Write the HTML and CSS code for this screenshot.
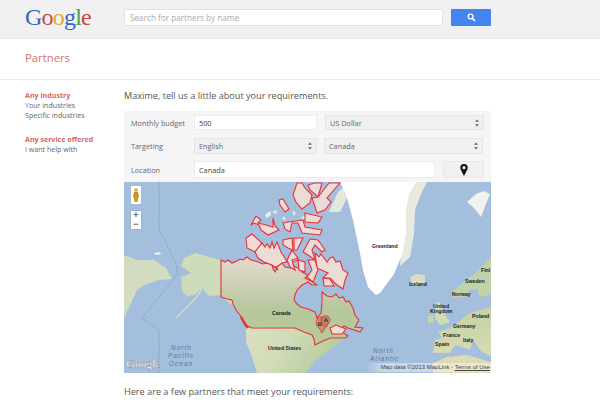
FILE: index.html
```html
<!DOCTYPE html>
<html lang="en">
<head>
<meta charset="utf-8">
<title>Google Partners</title>
<link rel="stylesheet" href="styles.css">
</head>
<body>
<header class="topbar">
  <div class="logo"><span class="g-blue">G</span><span class="g-red">o</span><span class="g-yellow">o</span><span class="g-blue">g</span><span class="g-green">l</span><span class="g-red">e</span></div>
  <div class="search">Search for partners by name</div>
  <button class="search-btn" aria-label="Search">
    <svg width="9" height="9" viewBox="0 0 11 11"><circle cx="4.300" cy="4.300" r="2.900" fill="none" stroke="#fff" stroke-width="1.600"/><path d="M6.500 6.500l3.300 3.300" stroke="#fff" stroke-width="2"/></svg>
  </button>
</header>
<div class="titlebar"><h1>Partners</h1></div>
<div class="content">
  <nav class="sidebar">
    <div class="group">
      <div class="active">Any industry</div>
      <div>Your industries</div>
      <div>Specific industries</div>
    </div>
    <div class="group">
      <div class="active">Any service offered</div>
      <div>I want help with</div>
    </div>
  </nav>
  <main class="main">
    <h2>Maxime, tell us a little about your requirements.</h2>
    <div class="panel">
      <div class="row row-a">
        <span class="label">Monthly budget</span>
        <div class="field input w-half">500</div>
        <div class="field select w-cur"><span>US Dollar</span><svg class="arrows" width="4" height="8" viewBox="0 0 5 9"><path d="M2.500 0L5 3H0zM2.500 9L0 6h5z" fill="#666"/></svg></div>
      </div>
      <div class="row row-b">
        <span class="label">Targeting</span>
        <div class="field select w-half"><span>English</span><svg class="arrows" width="4" height="8" viewBox="0 0 5 9"><path d="M2.500 0L5 3H0zM2.500 9L0 6h5z" fill="#666"/></svg></div>
        <div class="field select w-cur2"><span>Canada</span><svg class="arrows" width="4" height="8" viewBox="0 0 5 9"><path d="M2.500 0L5 3H0zM2.500 9L0 6h5z" fill="#666"/></svg></div>
      </div>
      <div class="row row-c">
        <span class="label">Location</span>
        <div class="field input w-loc">Canada</div>
        <button class="pin" aria-label="Locate">
          <svg width="8" height="12" viewBox="0 0 8 13"><path fill-rule="evenodd" d="M4 0a4 4 0 0 1 4 4c0 2.500-2.500 5.500-4 9C2.500 9.500 0 6.500 0 4a4 4 0 0 1 4-4zm0 2.200a1.800 1.800 0 1 0 0 3.600 1.800 1.800 0 0 0 0-3.600z" fill="#111"/></svg>
        </button>
      </div>
    </div>
    <div class="map">
      <svg class="map-art" width="367" height="191" viewBox="0 0 367 191">
        <defs>
          <linearGradient id="canada" gradientUnits="userSpaceOnUse" x1="0" y1="75" x2="0" y2="150"><stop offset="0" stop-color="#e2dacf"/><stop offset=".3" stop-color="#d3d2ba"/><stop offset=".7" stop-color="#b6c79c"/><stop offset="1" stop-color="#b8c99a"/></linearGradient>
          <linearGradient id="usa" gradientUnits="userSpaceOnUse" x1="120" y1="146" x2="190" y2="191"><stop offset="0" stop-color="#dadfc0"/><stop offset=".5" stop-color="#d2dcb8"/><stop offset="1" stop-color="#b8cea2"/></linearGradient>
          <linearGradient id="eur" gradientUnits="userSpaceOnUse" x1="0" y1="75" x2="0" y2="180"><stop offset="0" stop-color="#bfd0a8"/><stop offset=".6" stop-color="#c7d5a8"/><stop offset="1" stop-color="#dcdcb4"/></linearGradient>
          <path id="ca" d="M97 78L101 80 104 78 108 81 113 79 116 77 119 78 123 75 127 78 131 79 134 80 139 82 143 81 148 83 149 87 151 90 154 84 158 81 161 85 166 86 170 84 174 86 178 90 184 93 181 96 187 99 193 103 188 103 184 100 178 103 173 108 171 113 170 118 173 122 177 125 184 127 191 130 193 136 197 131 198 120 198 110 203 114 208 115 212 112 215 116 219 115 222 120 225 119 229 126 231 133 235 138 231 145 239 146 236 150 230 148 224 146 220 144 216 148 221 152 224 154 221 156 214 156 206 156 199 159 191 163 190 157 188 153 180 150 171 146 128 146 121 143 116 133 112 128 109 122 108 118 103 117 97 115z"/>
        </defs>
        <rect width="367" height="191" fill="#a4bfdd"/>
        <g class="land">
          <path fill="#d2dcc0" d="M0 73L13 78 30 78 42 86 48 97 35 98 20 103 13 108 7 121 0 136z"/>
          <path fill="#eef1ee" d="M30 71L36 70 37 72 32 73z"/>
          <path fill="#cfdcba" d="M97 78L85 75 72 71 60 76 57 84 67 91 57 95 58 108 62 114 70 113 78 106 85 114 97 113z"/>
          <path fill="#cfdcba" d="M97 113L108 118 112 128 108 123 97 115z"/>
          <path class="tail" d="M78 107L70 118 60 128 52 136"/>
          <use href="#ca" fill="url(#canada)"/>
          <path fill="url(#usa)" d="M122 145L171 146 188 153 191 163 206 156 221 156 212 163 200 172 190 180 182 191 133 191 128 175 122 160z"/>
          <path fill="#e4e8dc" d="M205 30L214 10 222 3 224 14 216 30z"/>
          <path fill="#e8eae0" d="M288 0L303 0 297 12 291 28 290 52 286 75 276 84 278 60 280 26z"/>
          <path fill="#fff" d="M216 0L292 0 285 12 282 28 282 52 278 73 270 92 256 111 252 113 244 105 239 88 236 71 229 38 222 12z"/>
          <path fill="#d8dcc8" d="M286 95L292 92 301 93 301 101 289 104z"/>
          <path fill="#f0f2f0" d="M343 20L352 12 360 9 366 12 362 22 357 35 350 26z"/>
          <path fill="url(#eur)" d="M367 75L349 93 339 101 328 110 329 115 341 115 346 108 353 106 356 115 364 113 367 110z"/>
          <path fill="url(#eur)" d="M367 125L346 131 334 140 326 146 314 150 318 156 311 158 309 171 326 171 331 163 338 165 346 168 349 158 358 170 367 174z"/>
          <path fill="#cfdbb0" d="M311 121L316 120 321 133 326 140 316 143 311 136z"/>
          <path fill="#c8d7a8" d="M304 134L309 133 309 141 304 141z"/>
          <path fill="#ded9b5" d="M309 191L309 181 323 175 343 173 367 180 367 191z"/>
          <path fill="#e8ecec" d="M141 33L146 29 147 33 143 36zM168 28L172 31 170 34zM148 30L152 28 153 32zM176 36L182 33 182 37zM158 37L160 34 162 38z"/>
        </g>
        <path class="dateline" d="M35 0V48L41 58 53 85V93L18 136 35 148V191"/>
        <use href="#ca" class="mainland"/>
        <path class="blob" d="M117 135L121 142 124 146"/>
        <g class="regions">
          <path d="M173 1L169 13 172 20 178 27 186 21 188 13 181 6 178 1z"/>
          <path d="M184 3L191 1 198 1 194 15 186 8z"/>
          <path d="M216 1L203 16 207 20 201 28 193 31 188 16 194 15 205 1z"/>
          <path d="M181 31L198 35 194 41 181 40z"/>
          <path d="M155 18L159 17 165 27 161 30 156 23z"/>
          <path d="M127 43L132 34 137 38 134 41 142 43 149 45 149 36 151 44 155 48 144 53 137 48 135 43 130 41z"/>
          <path d="M159 41L164 40 179 38 181 45 198 48 196 53 178 51 174 41 168 41 166 50 161 47z"/>
          <path d="M122 56L128 52 138 61 131 70 123 66z"/>
          <path d="M131 70L134 66 138 61 141 65 143 62 146 66 148 60 150 66 153 60 155 65 157 70 161 76 163 80 158 81 154 84 151 85 154 88 148 83 140 80 134 76z"/>
          <path d="M159 58L168 56 169 68 164 66 159 63z"/>
          <path d="M170 56L179 56 173 68 170 68z"/>
          <path d="M169 70L174 78 168 80z"/>
          <path d="M179 70L186 57 194 58 201 68 198 70 191 63 188 68 191 78 184 73z"/>
          <path d="M191 71L195 75 197 72 203 80 206 76 209 75 212 80 216 79 219 88 224 91 221 98 219 107 213 103 206 96 199 96 204 91 193 86z"/>
          <path d="M168 68L174 76 168 78 171 88 166 85 163 78z"/>
          <path d="M174 78L181 80 181 90 175 88z"/>
          <path d="M184 78L191 78 194 88 189 100 183 95 188 88z"/>
          <path d="M199 96L206 97 210 104 200 104z"/>
          <path d="M206 146L212 143 222 147 218 152 208 152z"/>
        </g>
        <g class="pins">
          <path d="M198 151l-3-5a6 6 0 1 1 6 0z"/>
          <path d="M201 145l-3-4a4.500 4.500 0 1 1 7 0z"/>
        </g>
        <text x="196" y="144" class="pin-letter">B</text>
        <text x="202" y="140" class="pin-letter">A</text>
        <text x="148" y="133" class="place">Canada</text>
        <text x="144" y="168" class="place">United States</text>
        <text x="248" y="66" class="place">Greenland</text>
        <text x="285" y="104" class="place">Iceland</text>
        <text x="309" y="126" class="place">United</text>
        <text x="306" y="131" class="place">Kingdom</text>
        <text x="328" y="114" class="place">Norway</text>
        <text x="341" y="101" class="place">Sweden</text>
        <text x="357" y="90" class="place">Finl</text>
        <text x="348" y="136" class="place">Poland</text>
        <text x="329" y="146" class="place">Germany</text>
        <text x="319" y="155" class="place">France</text>
        <text x="311" y="164" class="place">Spain</text>
        <text x="339" y="160" class="place">Italy</text>
        <text class="ocean"><tspan x="47" y="168">North</tspan><tspan x="44" y="176">Pacific</tspan><tspan x="45" y="184">Ocean</tspan></text>
        <text class="ocean"><tspan x="249" y="171">North</tspan><tspan x="246" y="179">Atlantic</tspan></text>
        <text x="2" y="186" class="wm">Google</text>
      </svg>
      <div class="pegman">
        <svg width="6" height="14" viewBox="0 0 6 14"><circle cx="3" cy="2" r="1.800" fill="#e0a020"/><path d="M1 4h4l1 5-1 1-.500 4h-3L1 10 0 9z" fill="#cf9420"/></svg>
      </div>
      <div class="zoom"><span>+</span><span>−</span></div>
      <div class="attrib">Map data ©2013 MapLink - <u>Terms of Use</u></div>
    </div>
    <h3>Here are a few partners that meet your requirements:</h3>
  </main>
</div>
</body>
</html>
```
FILE: styles.css
```css
* { box-sizing: border-box; }
html, body { margin: 0; height: 402px; overflow: hidden; }
body { background: #fff; font-family: "Open Sans", sans-serif; color: #555; }

.topbar { height: 39px; display: flex; align-items: flex-start; padding: 9px 0 0 25px; background: #f1f1f1; border-bottom: 1px solid #e6e6e6; }
.logo { width: 99px; margin-top: -7px; font: 24px/30px "Liberation Serif", serif; letter-spacing: -.8px; }
.g-blue { color: #3563c6; }
.g-red { color: #cf4a38; }
.g-yellow { color: #dfa92e; }
.g-green { color: #459f52; }
.search { width: 319px; height: 17px; padding-left: 5px; background: #fff; border: 1px solid #e2e2e2; font-size: 8.200px; line-height: 15px; color: #aaa; }
.search-btn { width: 40px; height: 17px; margin-left: 8px; padding: 0; display: flex; align-items: center; justify-content: center; border: 0; border-radius: 1px; background: #4285f0; }

.titlebar { height: 41px; border-bottom: 1px solid #ebebeb; padding-left: 25px; }
.titlebar h1 { margin: 0; padding-top: 10px; font-size: 11.300px; line-height: 18px; font-weight: 400; color: #d2736c; }

.content { display: flex; padding-left: 25px; }
.sidebar { width: 99px; padding-top: 10px; font-size: 7.100px; line-height: 10px; color: #666; }
.group { margin-bottom: 14px; }
.active { font-weight: 700; color: #d9665e; }

.main { width: 367px; }
.main h2, .main h3 { margin: 0; font-size: 9.150px; font-weight: 400; color: #555; }
.main h2 { padding-top: 8px; line-height: 16px; height: 31px; }
.main h3 { padding-top: 11px; line-height: 16px; }

.panel { height: 71px; background: #f5f5f5; padding: 4px 7px 0 7px; font-size: 7.300px; color: #666; }
.row { display: flex; align-items: center; }
.row-a { height: 15px; }
.row-b { height: 16px; margin-top: 8px; }
.row-c { height: 17px; margin-top: 7px; }
.label { width: 63px; }
.field { height: 100%; display: flex; align-items: center; justify-content: space-between; padding: 0 4px; font-size: 7.300px; }
.input { background: #fff; border: 1px solid #ececec; color: #444; }
.select { background: #f0f0f0; border: 1px solid #e6e6e6; color: #666; }
.arrows { flex: none; }
.w-half { width: 123px; }
.w-cur { width: 159px; margin-left: 8px; }
.w-cur2 { width: 159px; margin-left: 7px; }
.w-loc { width: 241px; }
.pin { width: 41px; height: 100%; margin-left: 8px; padding: 0; display: flex; align-items: center; justify-content: center; background: #f0f0f0; border: 1px solid #e8e8e8; }

.map { position: relative; height: 191px; overflow: hidden; }
.map-art { display: block; }
.land path, .land use { filter: blur(.7px); }
.land .tail { fill: none; stroke: #cfdcba; stroke-width: 1.500; }
.dateline { fill: none; stroke: #7f8ea8; stroke-width: .7; stroke-dasharray: 1.500 1; }
.mainland { fill: none; stroke: #e8303a; stroke-width: 1.100; stroke-linejoin: miter; }
.blob { fill: none; stroke: #e8303a; stroke-width: 2.500; }
.regions path { fill: #ecdcd6; stroke: #e8303a; stroke-width: 1.100; stroke-linejoin: miter; }
.pins path { fill: rgba(208, 110, 92, .65); stroke: #d03c36; stroke-width: .8; }
.pin-letter { font: 700 6px "Liberation Sans", sans-serif; fill: #333; text-anchor: middle; }
.place { font: 700 5.200px "Liberation Sans", sans-serif; fill: #222; }
.ocean { font: italic 6.500px "Liberation Sans", sans-serif; letter-spacing: 1px; fill: #5d7590; }
.wm { font: 700 11.500px "Liberation Serif", serif; fill: #eef; stroke: #8c8c8c; stroke-width: .4; }
.pegman { position: absolute; left: 7px; top: 4px; width: 10px; height: 18px; display: flex; align-items: center; justify-content: center; background: #fff; border-radius: 1px; box-shadow: 0 0 1px #888; }
.zoom { position: absolute; left: 7px; top: 29px; width: 10px; height: 18px; display: flex; flex-direction: column; background: #fff; box-shadow: 0 0 1px #888; }
.zoom span { height: 9px; font: 700 9px/9px "Liberation Sans", sans-serif; text-align: center; color: #666; }
.attrib { position: absolute; right: 0; bottom: 1px; padding: 1px 1px 1px 14px; font: 6px/7px "Liberation Sans", sans-serif; color: #444; background: linear-gradient(90deg, rgba(255,255,255,0), rgba(255,255,255,.4) 12%); white-space: nowrap; }
```
